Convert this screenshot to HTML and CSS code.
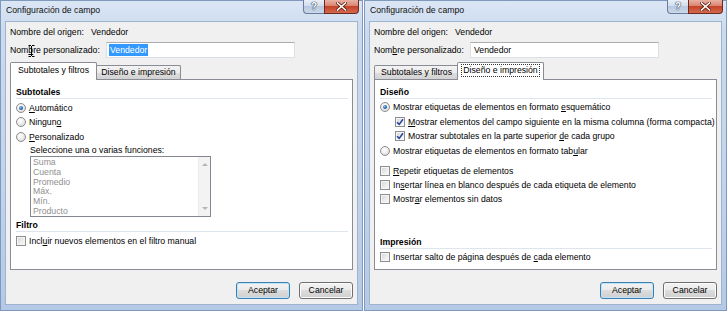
FILE: index.html
```html
<!DOCTYPE html>
<html lang="es">
<head>
<meta charset="utf-8">
<title>Configuración de campo</title>
<link rel="stylesheet" href="styles.css">
</head>
<body>
<div class="screen">
  <div class="dialog">
    <div class="titlebar">
      <span class="title">Configuración de campo</span>
      <div class="caption">
        <span class="cap-help">?</span>
        <span class="cap-close">
          <svg width="11" height="9" viewBox="0 0 11 9"><path d="M1.5 1 L9.5 8 M9.5 1 L1.5 8" stroke="#5a1a10" stroke-width="3" stroke-linecap="square" fill="none"/><path d="M1.5 1 L9.5 8 M9.5 1 L1.5 8" stroke="#ffffff" stroke-width="1.6" stroke-linecap="square" fill="none"/></svg>
        </span>
      </div>
    </div>
    <div class="client">
      <div class="row-origin"><span class="lbl-origin">Nombre del origen:</span><span>Vendedor</span></div>
      <div class="row-name"><span class="lbl-name">Nom<u>b</u>re personalizado:</span><div class="textbox"><span class="sel">Vendedor</span></div></div>
      <div class="tabs">
        <div class="tab active first">Subtotales y filtros</div>
        <div class="tab inactive after-active">Diseño e impresión</div>
      </div>
      <div class="panel">
        <div class="heading">Subtotales</div>
        <div class="grp-l">
          <div class="opt"><span class="radio on"></span><span><u>A</u>utomático</span></div>
          <div class="opt"><span class="radio"></span><span>Ningun<u>o</u></span></div>
          <div class="opt"><span class="radio"></span><span><u>P</u>ersonalizado</span></div>
        </div>
        <div class="fn-label">Seleccione una o varias funciones:</div>
        <div class="listbox">
          <div class="items">
            <div>Suma</div>
            <div>Cuenta</div>
            <div>Promedio</div>
            <div>Máx.</div>
            <div>Mín.</div>
            <div>Producto</div>
          </div>
          <div class="sb">
            <span class="arrow-up"></span>
            <span class="arrow-down"></span>
          </div>
        </div>
        <div class="heading filtro">Filtro</div>
        <div class="opt cb-filtro"><span class="check"></span><span>Incl<u>u</u>ir nuevos elementos en el filtro manual</span></div>
      </div>
      <div class="buttons">
        <div class="btn default">Aceptar</div>
        <div class="btn">Cancelar</div>
      </div>
    </div>
    <svg class="ibeam" width="7" height="12" viewBox="0 0 7 12"><path d="M0.5 0.5h2.5M4 0.5h2.5M3.5 1v10M0.5 11.5h2.5M4 11.5h2.5" stroke="#000" stroke-width="1" fill="none"/></svg>
  </div>

  <div class="dialog">
    <div class="titlebar">
      <span class="title">Configuración de campo</span>
      <div class="caption">
        <span class="cap-help">?</span>
        <span class="cap-close">
          <svg width="11" height="9" viewBox="0 0 11 9"><path d="M1.5 1 L9.5 8 M9.5 1 L1.5 8" stroke="#5a1a10" stroke-width="3" stroke-linecap="square" fill="none"/><path d="M1.5 1 L9.5 8 M9.5 1 L1.5 8" stroke="#ffffff" stroke-width="1.6" stroke-linecap="square" fill="none"/></svg>
        </span>
      </div>
    </div>
    <div class="client">
      <div class="row-origin"><span class="lbl-origin">Nombre del origen:</span><span>Vendedor</span></div>
      <div class="row-name"><span class="lbl-name">Nom<u>b</u>re personalizado:</span><div class="textbox"><span class="plain">Vendedor</span></div></div>
      <div class="tabs">
        <div class="tab inactive first">Subtotales y filtros</div>
        <div class="tab active after-inactive"><span class="focus">Diseño e impresión</span></div>
      </div>
      <div class="panel">
        <div class="heading">Diseño</div>
        <div class="grp-a">
          <div class="opt"><span class="radio on"></span><span>Mostrar etiquetas de elementos en formato <u>e</u>squemático</span></div>
          <div class="opt sub"><span class="check"><svg width="8" height="8" viewBox="0 0 8 8"><path d="M1 4.2 L3.2 6.4 L7 1.3" stroke="#20419a" stroke-width="1.5" fill="none"/></svg></span><span><u>M</u>ostrar elementos del campo siguiente en la misma columna (forma compacta)</span></div>
          <div class="opt sub"><span class="check"><svg width="8" height="8" viewBox="0 0 8 8"><path d="M1 4.2 L3.2 6.4 L7 1.3" stroke="#20419a" stroke-width="1.5" fill="none"/></svg></span><span>Mostrar subtotales en la parte superior <u>d</u>e cada grupo</span></div>
          <div class="opt"><span class="radio"></span><span>Mostrar etiquetas de elementos en formato tab<u>u</u>lar</span></div>
        </div>
        <div class="grp-b">
          <div class="opt"><span class="check"></span><span><u>R</u>epetir etiquetas de elementos</span></div>
          <div class="opt"><span class="check"></span><span>In<u>s</u>ertar línea en blanco después de cada etiqueta de elemento</span></div>
          <div class="opt"><span class="check"></span><span>Mostr<u>a</u>r elementos sin datos</span></div>
        </div>
        <div class="heading impresion">Impresión</div>
        <div class="opt cb-imp"><span class="check"></span><span>Insertar salto de página después de <u>c</u>ada elemento</span></div>
      </div>
      <div class="buttons">
        <div class="btn default">Aceptar</div>
        <div class="btn">Cancelar</div>
      </div>
    </div>
  </div>
</div>
</body>
</html>
```
FILE: styles.css
```css
* { box-sizing: border-box; }
html, body { margin: 0; padding: 0; background: #ffffff; }
body {
  font-family: "Liberation Sans", Arial, sans-serif;
  font-size: 8.7px;
  color: #000;
}
u { text-underline-offset: 1px; }

.screen {
  display: flex;
  gap: 1px;
  width: 728px;
  height: 311px;
}

.dialog {
  position: relative;
  width: 363px;
  height: 311px;
  flex: none;
  border: 1px solid #7f98bb;
  background: linear-gradient(180deg, #dbe6f5 0%, #cadaef 10%, #c2d4ec 60%, #b3c9e6 100%);
  display: flex;
  flex-direction: column;
}

.titlebar {
  height: 20px;
  flex: none;
  display: flex;
  justify-content: space-between;
  align-items: flex-start;
  padding-left: 5px;
  padding-right: 3px;
}
.title {
  margin-top: 3px;
  line-height: 12px;
  color: #111;
}
.caption {
  display: flex;
  margin-top: -1px;
}
.cap-help {
  width: 21px;
  height: 14px;
  border: 1px solid #6a7d9c;
  border-top: none;
  border-right: none;
  border-radius: 0 0 0 4px;
  background: linear-gradient(180deg, #e9eff7 0%, #d2dded 45%, #b9c9df 50%, #cbd8ea 100%);
  color: #fff;
  font-weight: bold;
  font-size: 10px;
  line-height: 13px;
  text-align: center;
  text-shadow: 0 0 1px #33415a, 0 0 1px #33415a, 0 0 1px #33415a;
}
.cap-close {
  width: 35px;
  height: 14px;
  border: 1px solid #6b2a1f;
  border-top: none;
  border-radius: 0 0 4px 0;
  background: linear-gradient(180deg, #e9b2a4 0%, #da8470 45%, #c54429 50%, #d4694e 100%);
  display: flex;
  align-items: center;
  justify-content: center;
}

.client {
  margin: 0 4px;
  height: 284px;
  flex: none;
  border: 1px solid #9fb3cf;
  background: #f0f0f0;
  padding: 0 4px;
  display: flex;
  flex-direction: column;
}

.row-origin {
  margin-top: 4px;
  height: 12px;
  line-height: 12px;
  display: flex;
  flex: none;
}
.lbl-origin { width: 81px; flex: none; }

.row-name {
  margin-top: 4px;
  height: 16px;
  display: flex;
  align-items: center;
  flex: none;
}
.lbl-name { width: 96px; flex: none; }
.textbox {
  width: 189px;
  height: 16px;
  border: 1px solid #dbdfe6;
  border-top-color: #abadb3;
  background: #fff;
  padding: 1px 0 0 2px;
  line-height: 12px;
}
.sel {
  display: inline-block;
  background: #3399ff;
  color: #fff;
  padding: 0 1px;
}
.plain { display: inline-block; padding: 0 1px; }

.tabs {
  margin-top: 4px;
  height: 17px;
  flex: none;
  display: flex;
  align-items: flex-end;
  position: relative;
  z-index: 2;
}
.tab {
  border: 1px solid #898c95;
  border-bottom: none;
  border-radius: 2px 2px 0 0;
  text-align: center;
  white-space: nowrap;
}
.tab.inactive {
  height: 14px;
  line-height: 12px;
  background: linear-gradient(180deg, #f3f3f3 0%, #ebebeb 50%, #dedede 51%, #d2d2d2 100%);
}
.tab.active {
  height: 18px;
  margin-bottom: -1px;
  line-height: 15px;
  background: #fff;
  position: relative;
  z-index: 3;
}
.dialog:first-child .tab.active { width: 87px; }
.dialog:first-child .tab.inactive { width: 85px; margin-left: -1px; }
.dialog:last-child .tab.inactive { width: 85px; }
.dialog:last-child .tab.active { width: 87px; margin-left: -2px; }
.focus {
  display: inline-block;
  border: 1px dotted #333;
  line-height: 11px;
  padding: 0 1px;
  margin-top: 1px;
}

.panel {
  height: 191px;
  flex: none;
  border: 1px solid #898c95;
  background: #fff;
  padding: 0 4px 0 5px;
  display: flex;
  flex-direction: column;
  position: relative;
  z-index: 1;
}

.heading {
  margin-top: 6px;
  height: 13px;
  line-height: 12px;
  font-weight: bold;
  border-bottom: 1px solid #dfe5ed;
  flex: none;
}

.opt {
  display: flex;
  align-items: center;
  white-space: nowrap;
  flex: none;
}
.grp-l { margin-top: 2px; }
.grp-l .opt { height: 14.3px; }
.grp-a { margin-top: 1px; }
.grp-a .opt { height: 14.5px; }
.grp-b { margin-top: 6px; }
.grp-b .opt { height: 14px; }
.opt.sub { padding-left: 15px; }

.radio {
  width: 10px;
  height: 10px;
  flex: none;
  margin-right: 3px;
  border-radius: 50%;
  border: 1px solid #8d8d8d;
  background: radial-gradient(circle at 40% 35%, #ffffff 0%, #eeeeee 45%, #cfcfcf 100%);
  display: flex;
  align-items: center;
  justify-content: center;
}
.radio.on::after {
  content: "";
  width: 4px;
  height: 4px;
  border-radius: 50%;
  background: radial-gradient(circle at 35% 35%, #8fc1f0 0%, #2a6cb6 50%, #123f7a 100%);
}

.check {
  width: 10px;
  height: 10px;
  flex: none;
  margin-right: 3px;
  border: 1px solid #8e8f8f;
  background: linear-gradient(135deg, #d0d3d8 0%, #eeeeee 60%, #fafafa 100%);
  box-shadow: inset 0 0 0 1px #f6f6f6;
  display: flex;
  align-items: center;
  justify-content: center;
}
.check svg { display: block; }

.fn-label {
  margin-left: 14px;
  height: 12.5px;
  line-height: 12.5px;
  flex: none;
}

.listbox {
  margin-left: 14px;
  width: 181px;
  height: 61px;
  flex: none;
  border: 1px solid #828790;
  background: #fff;
  display: flex;
}
.items {
  flex: 1;
  padding: 0.6px 0 0 2px;
  color: #8f8f8f;
  line-height: 9.8px;
  overflow: hidden;
}
.sb {
  width: 12px;
  flex: none;
  background: #f3f3f3;
  border-left: 1px solid #ececec;
  display: flex;
  flex-direction: column;
  justify-content: space-between;
  align-items: center;
  padding: 6px 0 6px 0;
}
.arrow-up {
  width: 0; height: 0;
  border-left: 3px solid transparent;
  border-right: 3px solid transparent;
  border-bottom: 3px solid #b5b5b5;
}
.arrow-down {
  width: 0; height: 0;
  border-left: 3px solid transparent;
  border-right: 3px solid transparent;
  border-top: 3px solid #b5b5b5;
}

.heading.filtro { margin-top: 1.6px; }
.cb-filtro { margin-top: 2px; height: 14px; }
.heading.impresion { margin-top: 30px; }
.cb-imp { margin-top: 1px; height: 14px; }

.buttons {
  margin-top: 12px;
  height: 17px;
  flex: none;
  display: flex;
  justify-content: flex-end;
  gap: 9px;
}
.btn {
  width: 54px;
  height: 17px;
  border: 1px solid #707070;
  border-radius: 3px;
  background: linear-gradient(180deg, #f2f2f2 0%, #ebebeb 49%, #dddddd 50%, #cfcfcf 100%);
  box-shadow: inset 0 0 0 1px #fbfbfb;
  text-align: center;
  line-height: 15px;
}
.btn.default {
  border-color: #3c7fb1;
  box-shadow: inset 0 0 0 1px #bfe4fa;
}

.ibeam {
  position: absolute;
  left: 27px;
  top: 44px;
}
```
